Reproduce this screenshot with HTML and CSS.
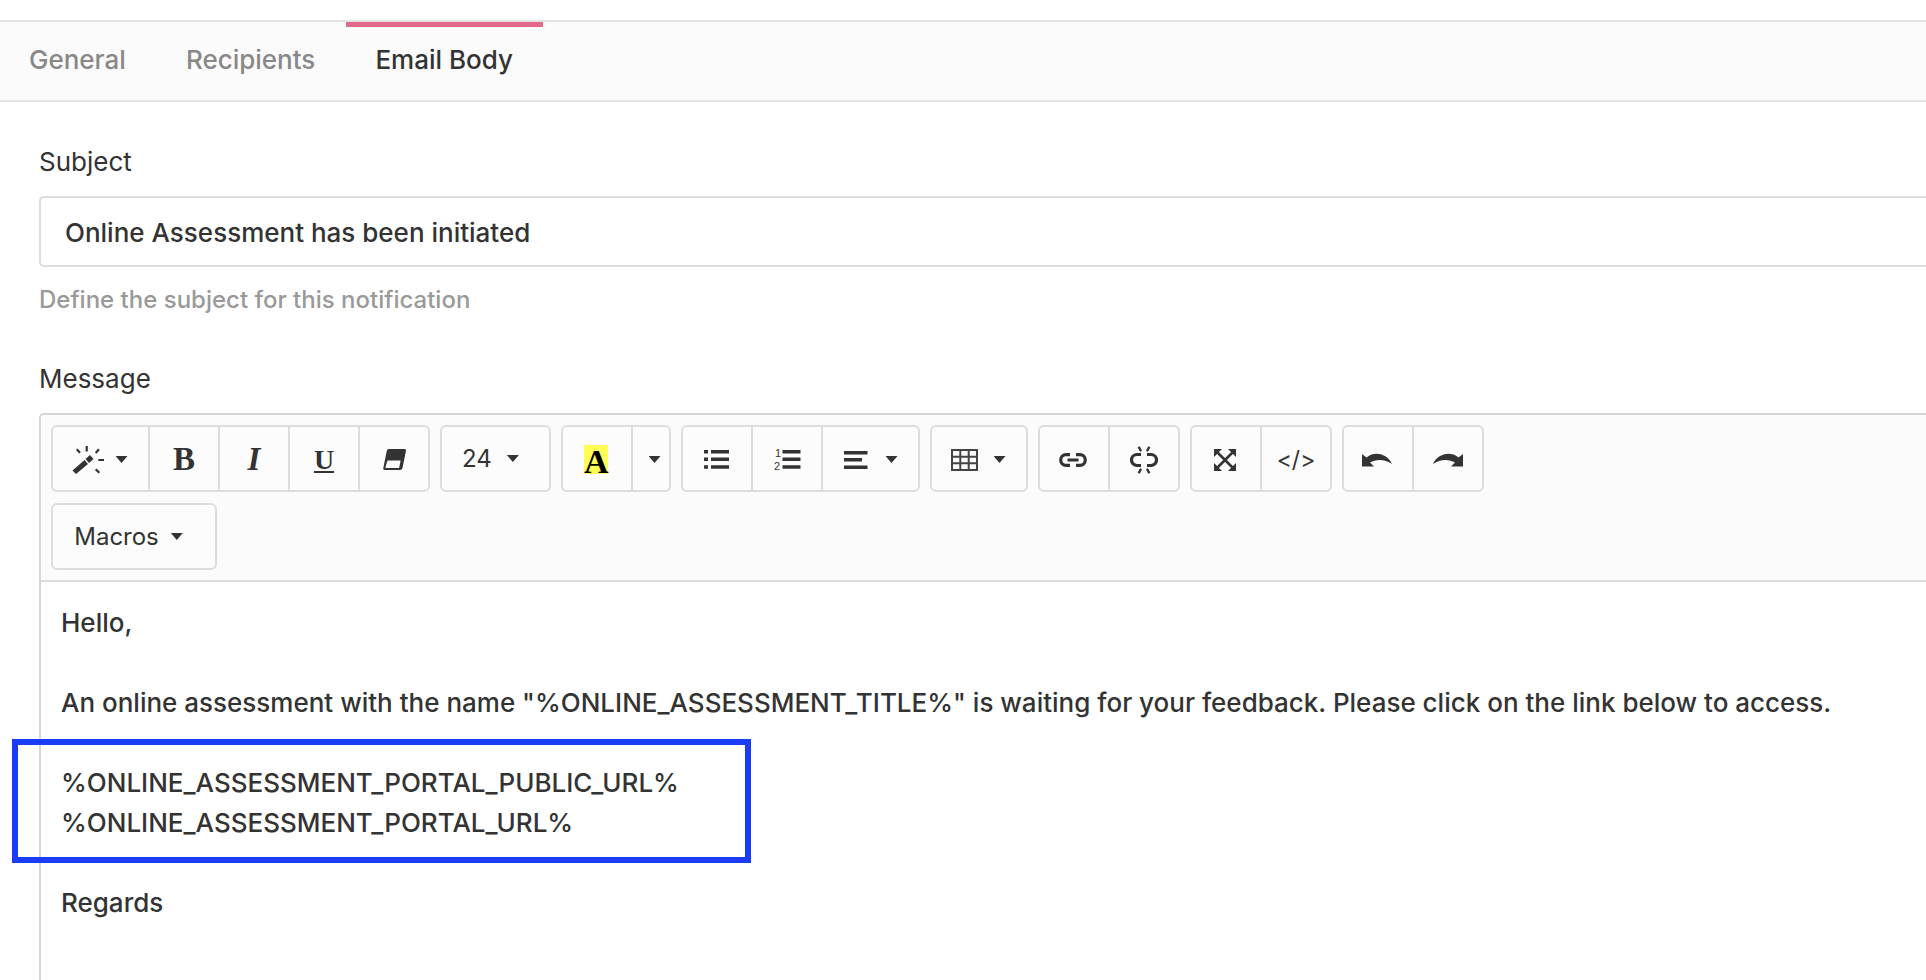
FILE: index.html
```html
<!DOCTYPE html>
<html lang="en">
<head>
<meta charset="utf-8">
<title>Email Body</title>
<link rel="stylesheet" href="styles.css">
</head>
<body>
<div class="page">
  <nav class="tabs">
    <a class="tab">General</a>
    <a class="tab">Recipients</a>
    <a class="tab active">Email Body</a>
  </nav>
  <main class="form">
    <label class="label">Subject</label>
    <div class="input">Online Assessment has been initiated</div>
    <p class="help">Define the subject for this notification</p>
    <label class="label message-label">Message</label>
    <section class="editor">
      <div class="toolbar">
        <div class="row">
          <div class="group">
            <button class="btn w97"><svg class="icon" width="32" height="28" viewBox="0 0 32 28"><path d="M0.500 24.500 12.500 14l3.500 4L4 28z" fill="#333"/><path d="M13.500 13 18 9l3.500 4-4.500 4z" fill="#333"/><path d="M14.700 0v5.500M4.700 3.300 8 6.700M27 3.300 23.700 7M26.300 14H32M23.700 23.300l3.600 3.400" stroke="#333" stroke-width="2.200" fill="none"/></svg><i class="caret"></i></button>
            <button class="btn"><span class="serif bold">B</span></button>
            <button class="btn"><span class="serif italic">I</span></button>
            <button class="btn"><span class="serif under">U</span></button>
            <button class="btn"><svg class="icon" width="23" height="21" viewBox="0 0 23 21"><path d="M6 0H21.500Q23.300 0 23 1.500L19.500 19Q19 21 17 21H2Q0 21 0.300 19L3.800 1.800Q4.200 0 6 0z" fill="#333"/><path d="M4.500 11.500H17.600L16.200 18.500Q16 19 15.500 19H3Q2.300 19 2.400 18.300z" fill="#fbfbfb"/></svg></button>
          </div>
          <div class="group"><button class="btn w109 text num">24<i class="caret"></i></button></div>
          <div class="group">
            <button class="btn"><span class="color">A</span></button>
            <button class="btn w38 off"><i class="caret"></i></button>
          </div>
          <div class="group">
            <button class="btn"><svg class="icon" width="25" height="19" viewBox="0 0 25 19"><path d="M0 0h4v3.500H0zM0 7.500h4V11H0zM0 15.300h4v3.500H0zM7 0h18v3.500H7zM7 7.500h18V11H7zM7 15.300h18v3.500H7z" fill="#333"/></svg></button>
            <button class="btn"><svg class="icon" width="27" height="27" viewBox="0 -3 27 27"><path d="M8.500 1h18v3.500h-18zM8.500 8.500h18V12h-18zM8.500 16.300h18v3.500h-18z" fill="#333"/><text class="digit" x="1" y="8">1</text><text class="digit" x="0" y="20.500">2</text></svg></button>
            <button class="btn w97 gap18"><svg class="icon" width="24" height="18" viewBox="0 0 24 18"><path d="M0 0h23.500v3.500H0zM0 7h18v3.500H0zM0 14.500h23.500V18H0z" fill="#333"/></svg><i class="caret"></i></button>
          </div>
          <div class="group">
            <button class="btn w96 gap16"><svg class="icon" width="27" height="22" viewBox="0 0 27 22"><path d="M1 1h25v20H1zM1 7.700h25M1 14.300h25M9.300 1v20M17.700 1v20" fill="none" stroke="#444" stroke-width="2"/></svg><i class="caret"></i></button>
          </div>
          <div class="group">
            <button class="btn"><svg class="icon" width="28" height="14" viewBox="0 0 28 14"><path d="M11 1.700H7a5.300 5.300 0 0 0 0 10.600h4M17 1.700h4a5.300 5.300 0 0 1 0 10.600h-4M8.500 7h11" fill="none" stroke="#333" stroke-width="3.200"/></svg></button>
            <button class="btn"><svg class="icon" width="28" height="28" viewBox="0 0 28 28"><path d="M11 8.500H7a5.500 5.500 0 0 0 0 11h4M17 8.500h4a5.500 5.500 0 0 1 0 11h-4" fill="none" stroke="#333" stroke-width="3.200"/><path d="M8.700 0.700 11 5.300M19.300 0.700 17 5.300M8.700 27.300 11 22.700M19.300 27.300 17 22.700" stroke="#333" stroke-width="2.400"/></svg></button>
          </div>
          <div class="group">
            <button class="btn"><svg class="icon" width="22" height="22" viewBox="0 0 22 22"><path d="M3 3l16 16M19 3 3 19" stroke="#333" stroke-width="2.500"/><path d="M0 0h8L0 8zM22 0v8L14 0zM0 22v-8l8 8zM22 22h-8l8-8z" fill="#333"/></svg></button>
            <button class="btn code">&lt;/&gt;</button>
          </div>
          <div class="group">
            <button class="btn"><svg class="icon" width="30" height="15" viewBox="0 0 30 15"><path d="M0 2V14.500H12L8 10.500C14 7 23 7 30 12 26 3 14-2 4.500 5.500z" fill="#333"/></svg></button>
            <button class="btn"><svg class="icon" width="30" height="15" viewBox="0 0 30 15"><path d="M30 2V14.500H18L22 10.500C16 7 7 7 0 12 4 3 16-2 25.500 5.500z" fill="#333"/></svg></button>
          </div>
        </div>
        <div class="row">
          <div class="group"><button class="btn macros text">Macros<i class="caret"></i></button></div>
        </div>
      </div>
      <div class="content">
        <p>Hello,</p>
        <p>&nbsp;</p>
        <p>An online assessment with the name "%ONLINE_ASSESSMENT_TITLE%" is waiting for your feedback. Please click on the link below to access.</p>
        <p>&nbsp;</p>
        <p>%ONLINE_ASSESSMENT_PORTAL_PUBLIC_URL%</p>
        <p>%ONLINE_ASSESSMENT_PORTAL_URL%</p>
        <p>&nbsp;</p>
        <p>Regards</p>
      </div>
    </section>
  </main>
  <div class="highlight"></div>
</div>
</body>
</html>
```
FILE: styles.css
```css
* { box-sizing: border-box; }
html, body { margin: 0; height: 100%; overflow: hidden; background: #fff; }
body { font-family: Inter, "Liberation Sans", sans-serif; font-size: 26px; color: #333; }
.page { position: relative; height: 980px; overflow: hidden; padding-top: 20px; }
.tabs { display: flex; height: 82px; background: #fbfbfb; border-top: 2px solid #e3e3e3; border-bottom: 2px solid #e3e3e3; }
.tab { position: relative; padding: 0 30px; line-height: 76px; color: #888; font-weight: 500; }
.tab:first-child { padding-left: 29px; }
.tab.active { color: #333; margin-left: 1px; padding-left: 29px; }
.tab.active::before { content: ""; position: absolute; left: 0; right: 0; top: 0; height: 5px; background: #e4688c; }
.form { padding: 44px 0 0 39px; }
.label { display: block; line-height: 32px; }
.input { margin-top: 18px; height: 71px; line-height: 69px; padding-left: 24px; border: 2px solid #ddd; border-right: 0; border-radius: 5px 0 0 5px; font-weight: 500; color: #333; }
.help { margin: 17px 0 0; line-height: 32px; color: #999; font-weight: 500; font-size: 24px; }
.message-label { margin-top: 47px; }
.editor { margin-top: 18px; border: 2px solid #d6d6d6; border-right: 0; border-bottom: 0; border-radius: 5px 0 0 0; }
.toolbar { background: #fbfbfb; border-bottom: 2px solid #ddd; padding: 10px 0 10px 10px; display: flex; flex-direction: column; gap: 11px; border-radius: 5px 0 0 0; }
.row { display: flex; gap: 10px; }
.group { display: flex; height: 67px; border: 2px solid #ddd; border-radius: 6px; background: #fcfcfc; }
.btn { display: flex; align-items: center; justify-content: center; gap: 12px; width: 70px; padding: 2px 0 0; height: 100%; border: 0; border-left: 2px solid #ddd; background: none; color: #333; font-family: inherit; }
.btn:first-child { border-left: 0; margin-left: -2px; }
.w96 { width: 96px; }
.w97 { width: 97px; }
.w109 { width: 109px; }
.w38 { width: 38px; }
.off { padding-left: 7px; }
.gap18 { gap: 18px; }
.gap16 { gap: 16px; }
.macros { width: 164px; padding-right: 9px; }
.num { padding-right: 8px; gap: 15px; }
.text { font-size: 24px; padding-top: 0; }
.caret { flex: none; display: block; width: 12px; height: 7px; background: #333; clip-path: polygon(0 0, 100% 0, 50% 100%); }
.serif { font-family: "Liberation Serif", serif; font-size: 33px; line-height: 1; color: #333; }
.bold { font-weight: 700; }
.italic { font-style: italic; font-weight: 700; }
.under { font-weight: 700; text-decoration: underline; text-decoration-thickness: 2px; text-underline-offset: 2px; font-size: 28px; }
.color { display: block; width: 24px; height: 29px; background: #ffff55; color: #000; font-family: "Liberation Serif", serif; font-weight: 700; font-size: 34px; line-height: 33px; text-align: center; }
.code { font-size: 23px; }
.digit { font-family: "Liberation Sans", sans-serif; font-size: 11px; fill: #333; }
.icon { display: block; flex: none; }
.content { padding: 21px 0 0 20px; min-height: 420px; background: #fff; }
.content p { margin: 0; line-height: 40px; font-weight: 500; white-space: nowrap; }
.highlight { position: absolute; left: 12px; top: 739px; width: 739px; height: 124px; border: 6px solid #1a3cf5; }
```
